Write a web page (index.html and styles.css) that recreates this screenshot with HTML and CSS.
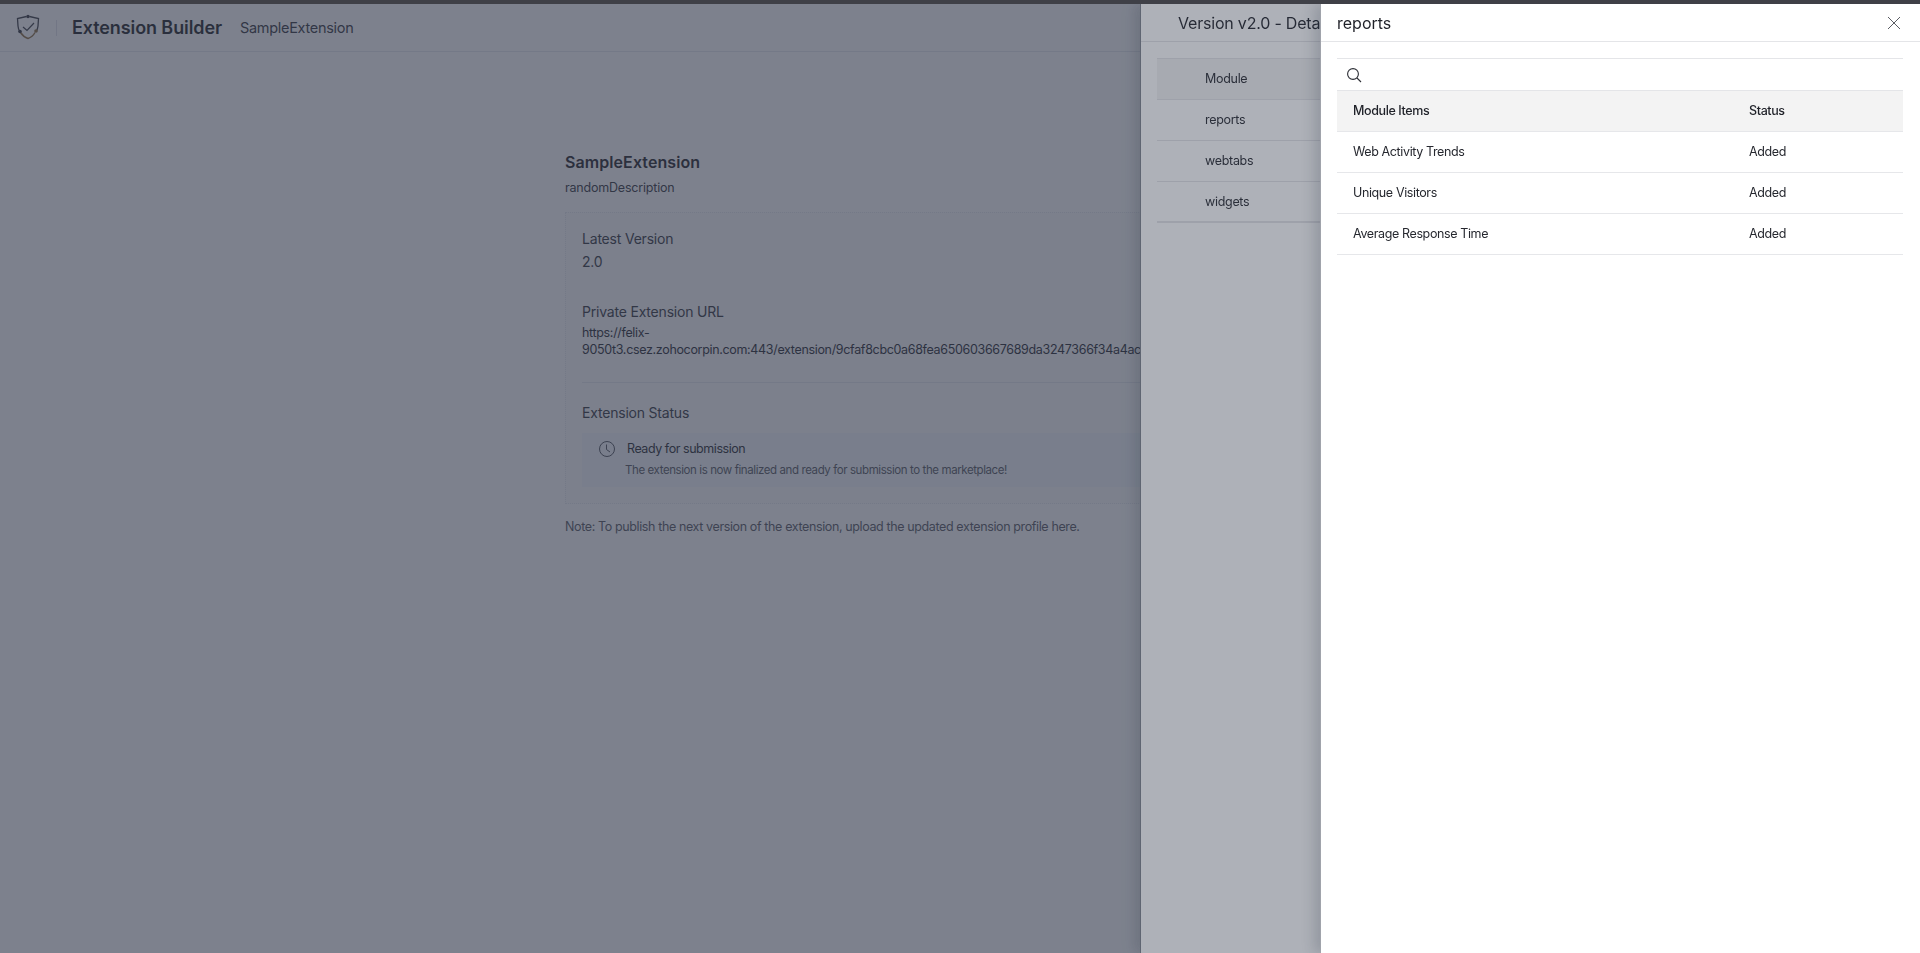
FILE: index.html
```html
<!DOCTYPE html>
<html lang="en">
<head>
<meta charset="utf-8">
<title>Extension Builder</title>
<link rel="stylesheet" href="styles.css">
</head>
<body>
<div class="app">
  <header class="topbar">
    <svg class="logo" width="28" height="28" viewBox="0 0 28 28" fill="none" aria-hidden="true">
      <path d="M12.5 2.5 L3.5 4.5 L4 12 Q4.3 15 5.5 17" stroke="#3a3c44" stroke-width="1.3"/>
      <path d="M15.5 2.5 L24.5 4.5 L24 12 Q23.7 14.5 22.5 17" stroke="#3a3c44" stroke-width="1.3"/>
      <path d="M6.5 18.5 Q9.5 23 14 24.5 Q18.5 23 21 18.5" stroke="#8f7044" stroke-width="1.5"/>
      <circle cx="14" cy="2.5" r="1.7" fill="#33353d"/>
      <circle cx="6" cy="17.5" r="1.8" fill="#33353d"/>
      <circle cx="22" cy="17" r="1.8" fill="#8f7044"/>
      <path d="M9 13 L13 16.5 L20 9" stroke="#3a3c44" stroke-width="1.2"/>
    </svg>
    <span class="vr"></span>
    <span class="brand">Extension Builder</span>
    <span class="crumb">SampleExtension</span>
  </header>
  <main class="content">
    <h1 class="ext-name">SampleExtension</h1>
    <p class="ext-desc">randomDescription</p>
    <section class="card">
      <div class="field">
        <div class="label">Latest Version</div>
        <div class="version">2.0</div>
      </div>
      <div class="field url-field">
        <div class="label">Private Extension URL</div>
        <div class="url">https://felix-<br>9050t3.csez.zohocorpin.com:443/extension/9cfaf8cbc0a68fea650603667689da3247366f34a4ac</div>
      </div>
      <div class="status-field">
        <div class="label">Extension Status</div>
        <div class="status-box">
          <div class="status-head">
            <svg width="18" height="18" viewBox="0 0 18 18" fill="none" stroke="#4f525c" stroke-width="1" aria-hidden="true">
              <circle cx="9" cy="9" r="7.5"/>
              <path d="M8.5 4.5 V9.5 L12 12"/>
            </svg>
            <span>Ready for submission</span>
          </div>
          <div class="status-text">The extension is now finalized and ready for submission to the marketplace!</div>
        </div>
      </div>
    </section>
    <p class="note">Note: To publish the next version of the extension, upload the updated extension profile here.</p>
  </main>
</div>

<div class="scrim"></div>
<aside class="drawer drawer-back">
  <div class="drawer-head"><span class="back-title">Version v2.0 - Details</span></div>
  <div class="back-table">
    <div class="back-row back-th">Module</div>
    <div class="back-row">reports</div>
    <div class="back-row">webtabs</div>
    <div class="back-row back-last">widgets</div>
  </div>
</aside>
<div class="scrim"></div>
<aside class="drawer drawer-front">
  <div class="drawer-head front-head">
    <span class="front-title">reports</span>
    <svg class="close" width="14" height="14" viewBox="0 0 14 14" fill="none" stroke="#5a5c63" stroke-width="1" aria-hidden="true">
      <path d="M1 1 L13 13 M13 1 L1 13"/>
    </svg>
  </div>
  <div class="front-body">
    <div class="search">
      <svg width="16" height="16" viewBox="0 0 16 16" fill="none" stroke="#2c2e35" stroke-width="1.1" aria-hidden="true">
        <circle cx="7" cy="7" r="5.4"/>
        <path d="M11 11 L15 15"/>
      </svg>
    </div>
    <div class="row th"><span>Module Items</span><span>Status</span></div>
    <div class="row"><span>Web Activity Trends</span><span>Added</span></div>
    <div class="row"><span>Unique Visitors</span><span>Added</span></div>
    <div class="row"><span>Average Response Time</span><span>Added</span></div>
  </div>
</aside>
<div class="strip"></div>
</body>
</html>
```
FILE: styles.css
```css
* { box-sizing: border-box; }
html, body { height: 100%; margin: 0; }
body {
  font-family: Inter, "Liberation Sans", sans-serif;
  color: #1f2128;
  background: #fff;
  overflow: hidden;
}
.app { height: 100%; padding-top: 4px; }
.topbar {
  height: 48px;
  display: flex;
  align-items: center;
  padding-left: 14px;
  border-bottom: 1px solid #e6e8ee;
}
.logo { flex: none; }
.vr { width: 1px; height: 16px; background: #e0e2e8; margin: 0 15px 0 14px; }
.brand { font-size: 18px; font-weight: 600; letter-spacing: -.1px; color: #1d1f26; }
.crumb { font-size: 14.5px; letter-spacing: -.3px; margin-left: 18px; color: #33353c; }
.content { width: 790px; margin: 0 auto; padding-top: 99px; }
.ext-name { margin: 0; font-size: 16px; line-height: 22px; font-weight: 600; letter-spacing: .08px; }
.ext-desc { margin: 6px 0 0; font-size: 12.5px; letter-spacing: -.2px; line-height: 18px; color: #33353c; }
.card {
  margin-top: 15px;
  height: 292px;
  padding: 16px 16px 0;
  border: 1px dotted #e6e8ee;
  background: #fbfbfc;
}
.label { font-size: 14px; letter-spacing: -.2px; line-height: 20px; color: #33353c; }
.version { margin-top: 3px; font-size: 14px; letter-spacing: -.2px; line-height: 20px; color: #33353c; }
.url-field { margin-top: 30px; padding-bottom: 24px; border-bottom: 1px solid #e6e8ee; }
.url { margin-top: 2px; font-size: 12.5px; letter-spacing: -.33px; line-height: 17px; color: #26282f; white-space: nowrap; }
.status-field { padding-top: 20px; }
.status-box {
  margin-top: 10px;
  height: 54px;
  padding: 6px 16px;
  background: #f3f7fb;
}
.status-head { display: flex; align-items: center; gap: 11px; font-size: 12.5px; letter-spacing: -.45px; line-height: 20px; color: #26282f; }
.status-text { margin-top: 3px; padding-left: 27px; font-size: 11.5px; letter-spacing: -.41px; line-height: 16px; color: #55575f; }
.note { margin: 14px 0 0; font-size: 12.5px; letter-spacing: -.38px; line-height: 18px; color: #55575f; }

.scrim { position: fixed; inset: 0; background: rgba(50, 57, 75, .395); }
.drawer {
  position: fixed;
  top: 4px;
  right: 0;
  bottom: 0;
  background: #fff;
  box-shadow: -6px 0 12px rgba(30, 38, 58, .18);
}
.drawer-back { left: 1140px; border-left: 1px solid #7d818c; overflow: hidden; }
.drawer-front { left: 1320px; border-left: 1px solid #a0a3ab; }
.drawer-head { height: 38px; border-bottom: 1px solid #e4e5e8; display: flex; align-items: center; }
.back-title { padding-left: 37px; font-size: 16px; letter-spacing: -.2px; color: #1f2128; }
.back-table { margin: 16px 0 0 16px; }
.back-row {
  height: 41px;
  display: flex;
  align-items: center;
  padding: 0 0 1px 48px;
  font-size: 12.5px;
  letter-spacing: -.3px;
  border-bottom: 1px solid #e4e5e8;
  color: #26282f;
}
.back-th { height: 42px; background: #f3f3f3; border-top: 1px solid #e4e5e8; }
.back-last { border-bottom-width: 2px; }
.front-head { justify-content: space-between; padding: 0 19px 0 16px; }
.front-title { font-size: 16px; color: #1f2128; }
.front-body { margin: 16px 17px 0 16px; }
.search {
  height: 33px;
  display: flex;
  align-items: center;
  padding: 1px 0 0 9px;
  border-top: 1px solid #e4e5e8;
  border-bottom: 1px solid #e4e5e8;
}
.row {
  height: 41px;
  display: grid;
  grid-template-columns: 1fr 154px;
  align-items: center;
  padding: 0 0 1px 16px;
  font-size: 12.5px;
  letter-spacing: -.38px;
  color: #26282f;
  border-bottom: 1px solid #e6e7ea;
}
.th { background: #f3f3f3; color: #1f2128; font-weight: 500; }
.strip { position: fixed; top: 0; left: 0; right: 0; height: 4px; background: #3f4047; }
```
